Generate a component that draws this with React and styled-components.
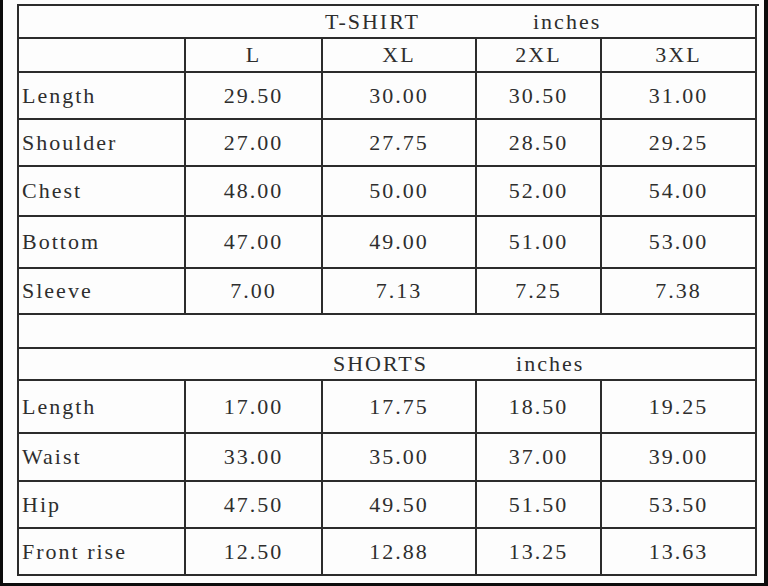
import React from "react";
import styled, { createGlobalStyle } from "styled-components";

const GlobalStyle = createGlobalStyle`
  html, body {
    margin: 0;
    padding: 0;
    background: #0c0c0c;
  }
  body {
    width: 768px;
    height: 586px;
    overflow: hidden;
  }
`;

const Page = styled.div`
  width: 761px;
  height: 583px;
  margin-left: 3px;
  background: #fdfdfd;
  padding: 4px 0 0 14px;
  box-sizing: border-box;
`;

const Sheet = styled.div`
  display: grid;
  grid-template-columns: 167px 137px 154px 125px 155px;
  grid-template-rows: 33px 34px 47px 47px 50px 52px 46px 34px 32px 53px 48px 47px 47px;
  width: 740px;
  border-top: 2px solid #2c2c2c;
  border-left: 2px solid #2c2c2c;
  font-family: "Liberation Serif", "Times New Roman", serif;
  font-size: 22px;
  letter-spacing: 2px;
  color: #2e2e2e;
`;

const Cell = styled.div`
  border-right: 2px solid #2c2c2c;
  border-bottom: 2px solid #2c2c2c;
  display: flex;
  align-items: center;
  justify-content: ${(p) => (p.$label ? "flex-start" : "center")};
  padding-left: ${(p) => (p.$label ? "3px" : "0")};
  white-space: pre;
`;

const Wide = styled.div`
  grid-column: 1 / -1;
  border-right: 2px solid #2c2c2c;
  border-bottom: 2px solid #2c2c2c;
  display: flex;
  align-items: center;
  padding-left: ${(p) => p.$indent || 0}px;
  gap: ${(p) => p.$gap || 0}px;
  white-space: pre;
`;

const sizes = ["L", "XL", "2XL", "3XL"];

const shirt = [
  ["Length", "29.50", "30.00", "30.50", "31.00"],
  ["Shoulder", "27.00", "27.75", "28.50", "29.25"],
  ["Chest", "48.00", "50.00", "52.00", "54.00"],
  ["Bottom", "47.00", "49.00", "51.00", "53.00"],
  ["Sleeve", "7.00", "7.13", "7.25", "7.38"],
];

const shorts = [
  ["Length", "17.00", "17.75", "18.50", "19.25"],
  ["Waist", "33.00", "35.00", "37.00", "39.00"],
  ["Hip", "47.50", "49.50", "51.50", "53.50"],
  ["Front rise", "12.50", "12.88", "13.25", "13.63"],
];

const Rows = ({ data }) =>
  data.map((row) =>
    row.map((v, i) => (
      <Cell key={row[0] + i} $label={i === 0}>
        {v}
      </Cell>
    ))
  );

const App = () => (
  <>
    <GlobalStyle />
    <Page>
      <Sheet>
        <Wide $indent={306} $gap={113}>
          <span>T-SHIRT</span>
          <span>inches</span>
        </Wide>
        <Cell />
        {sizes.map((s) => (
          <Cell key={s}>{s}</Cell>
        ))}
        <Rows data={shirt} />
        <Wide />
        <Wide $indent={314} $gap={88}>
          <span>SHORTS</span>
          <span>inches</span>
        </Wide>
        <Rows data={shorts} />
      </Sheet>
    </Page>
  </>
);

export default App;
